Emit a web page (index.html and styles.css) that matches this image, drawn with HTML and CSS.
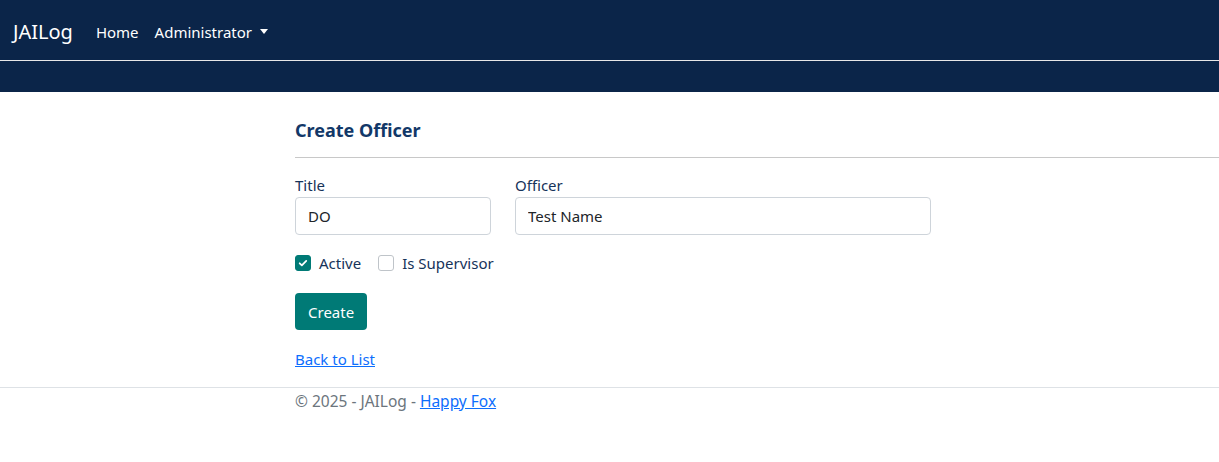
FILE: index.html
```html
<!DOCTYPE html>
<html>
<head>
<meta charset="utf-8">
<link rel="stylesheet" href="styles.css">
</head>
<body>
<header class="navbar">
  <div class="nav-top">
    <a class="brand" href="#">JAILog</a>
    <a class="nav-link" href="#">Home</a>
    <a class="nav-link dropdown" href="#">Administrator <span class="caret"></span></a>
  </div>
  <div class="nav-bottom"></div>
</header>
<main class="main">
  <h4 class="page-title">Create Officer</h4>
  <hr class="divider">
  <form class="form">
    <div class="row">
      <div class="field field-title">
        <label class="label">Title</label>
        <input class="input" type="text" value="DO">
      </div>
      <div class="field field-officer">
        <label class="label">Officer</label>
        <input class="input" type="text" value="Test Name">
      </div>
    </div>
    <div class="checks">
      <label class="check"><span class="box checked"><svg viewBox="0 0 16 16" width="16" height="16"><path d="M4.2 8.3l2.5 2.4 5-5" fill="none" stroke="#fff" stroke-width="2" stroke-linecap="round" stroke-linejoin="round"/></svg></span>Active</label>
      <label class="check"><span class="box"></span>Is Supervisor</label>
    </div>
    <button class="btn" type="button">Create</button>
  </form>
  <a class="link back" href="#">Back to List</a>
</main>
<footer class="footer">
  <div class="footer-inner">© 2025 - JAILog - <a class="link" href="#">Happy Fox</a></div>
</footer>
</body>
</html>
```
FILE: styles.css
```css
* { box-sizing: border-box; }
html, body { margin: 0; padding: 0; }
body {
  font-family: "Noto Sans", "Open Sans", sans-serif;
  font-size: 15px;
  color: #212529;
  background: #fff;
}
.navbar { background: #0b2549; height: 92px; }
.nav-top {
  height: 61px;
  display: flex;
  align-items: center;
  padding-left: 13px;
  padding-top: 3px;
  border-bottom: 1px solid #e8e8e8;
}
.brand { color: #fff; text-decoration: none; font-size: 20px; margin-right: 23px; }
.nav-link { color: #fff; text-decoration: none; font-size: 15px; margin-right: 16px; display: flex; align-items: center; }
.caret {
  display: inline-block; width: 0; height: 0; margin-left: 8px;
  border-left: 4px solid transparent; border-right: 4px solid transparent; border-top: 5px solid #fff;
}
.main { padding-left: 295px; padding-top: 24px; }
.page-title { margin: 0; font-size: 18px; font-weight: 700; color: #123868; line-height: 28px; }
.divider { border: 0; border-top: 1px solid #c8c8c8; margin: 13px 0 0 0; }
.form { padding-top: 16px; }
.row { display: flex; gap: 24px; }
.field { display: flex; flex-direction: column; }
.field-title { width: 196px; }
.field-officer { width: 416px; }
.label { color: #16335a; line-height: 22px; margin-bottom: 1px; }
.input {
  height: 38px; border: 1px solid #ced4da; border-radius: 4px;
  padding: 0 12px; font: inherit; font-size: 15px; color: #212529;
}
.checks { display: flex; gap: 17px; margin-top: 19px; align-items: center; }
.check { display: flex; align-items: center; color: #16335a; line-height: 18px; }
.box {
  width: 16px; height: 16px; border: 1px solid #bfc4c9; border-radius: 3px; margin-right: 8px;
  display: inline-flex; align-items: center; justify-content: center;
}
.box.checked { background: #007a76; border-color: #007a76; }
.box svg { display: block; }
.btn {
  margin-top: 21px; height: 37px; padding: 0 13px; background: #007a76; color: #fff;
  border: 0; border-radius: 4px; font: inherit; font-size: 15px; display: block;
}
.link { color: #0d6efd; text-decoration: underline; }
.back { display: inline-block; margin-top: 18px; line-height: 22px; }
.footer { border-top: 1px solid #dee2e6; margin-top: 17px; }
.footer-inner { padding-left: 295px; color: #6c757d; line-height: 26px; font-size: 15.5px; }
```
